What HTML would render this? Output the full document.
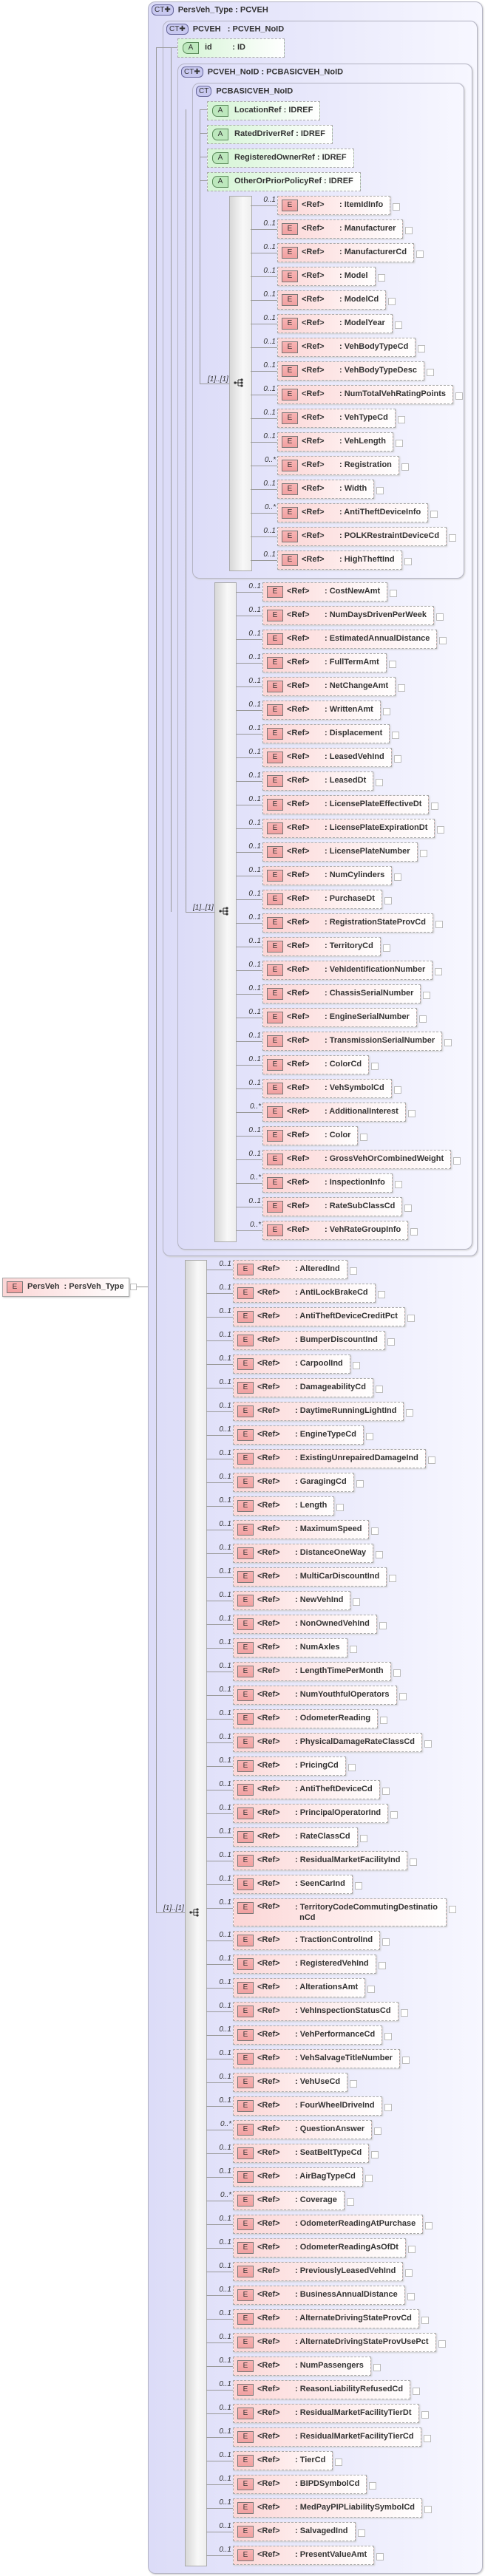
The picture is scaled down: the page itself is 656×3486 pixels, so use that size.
<!DOCTYPE html>
<html><head><meta charset="utf-8"><style>
body{margin:0;width:656px;height:3486px;background:#fff;position:relative;font-family:"Liberation Sans",sans-serif;color:#333;overflow:hidden}
.bx{position:absolute;border:1px solid #b4b4c4;border-radius:10px;background:linear-gradient(to right,#dcdcf8,#f7f7ff);box-shadow:1px 1px 2px #ccc}
.hd{position:absolute;font-size:11px;font-weight:bold;white-space:nowrap}
.ct{display:inline-block;height:13px;line-height:13px;padding:0 3px;border:1px solid #66669a;border-radius:6px;background:#c8c8f0;font-size:10px;font-weight:normal;margin-right:6px;vertical-align:middle}
.ln{position:absolute;background:#999}
.bar{position:absolute;border:1px solid #aaa;background:linear-gradient(to right,#d8d8d8,#f8f8f8 60%,#eee)}
.sq{position:absolute;font-size:10px;font-style:italic}
.g{position:absolute}
.r{position:absolute;left:0;height:26px;white-space:nowrap}
.r::before{content:"";position:absolute;left:-36px;width:36px;top:13px;height:1px;background:#999}
.r em{position:absolute;right:100%;margin-right:2px;top:0;font-size:10px}
.r p{position:absolute;left:0;top:0;margin:0;height:24px;line-height:22px;padding:0 9px 0 32px;border:1px dashed #aaa;background:linear-gradient(to right,#fcd6d6,#fff);font-size:11px;font-weight:bold;box-shadow:1px 1px 2px #ccc}
.r p::after{content:"";position:absolute;right:-14px;top:9px;width:8px;height:8px;border:1px solid #bbb;background:#fff}
.r s{position:absolute;left:5px;top:4px;width:20px;height:14px;line-height:14px;text-align:center;text-decoration:none;font-weight:normal;font-size:10px;border:1px solid #777;background:linear-gradient(#f9b4b4,#f0a0a0)}
.r i{display:inline-block;width:51px;font-style:normal}
.a{position:absolute;height:24px;line-height:22px;padding:0 9px 0 36px;border:1px dashed #aaa;background:linear-gradient(to right,#d4f4d4,#fff);font-size:11px;font-weight:bold;white-space:nowrap}
.a s{position:absolute;left:6px;top:4px;width:20px;height:14px;line-height:14px;text-align:center;text-decoration:none;font-weight:normal;font-size:10px;border:1px solid #5a8a5a;border-radius:7px 0 0 7px;background:#bde8bd}
.ico{position:absolute;width:14px;height:12px}
</style></head><body>

<div style="position:absolute;left:3px;top:1729px;width:170px;height:24px;border:1px solid #aaa;background:linear-gradient(to right,#fcd6d6,#fff);font-size:11px;font-weight:bold;line-height:22px;box-shadow:1px 1px 2px #ccc"><span style="position:absolute;left:5px;top:4px;width:20px;height:14px;line-height:14px;text-align:center;font-weight:normal;font-size:10px;border:1px solid #777;background:linear-gradient(#f9b4b4,#f0a0a0)">E</span><span style="position:absolute;left:33px">PersVeh&nbsp; : PersVeh_Type</span></div>
<div style="position:absolute;left:176px;top:1737px;width:7px;height:7px;border:1px solid #bbb;background:#fff"></div>
<div class="ln" style="left:185px;top:1741px;width:26px;height:1px"></div>

<div class="bx" style="left:200px;top:2px;width:451px;height:3479px"></div>
<div class="hd" style="left:205px;top:6px"><span class="ct">CT✚</span>PersVeh_Type : PCVEH</div>
<div class="bx" style="left:220px;top:28px;width:424px;height:1670px"></div>
<div class="hd" style="left:225px;top:32px"><span class="ct">CT✚</span>PCVEH &nbsp; : PCVEH_NoID</div>
<div class="bx" style="left:240px;top:86px;width:397px;height:1603px"></div>
<div class="hd" style="left:245px;top:90px"><span class="ct">CT✚</span>PCVEH_NoID : PCBASICVEH_NoID</div>
<div class="bx" style="left:260px;top:112px;width:366px;height:669px"></div>
<div class="hd" style="left:265px;top:116px"><span class="ct">CT</span>PCBASICVEH_NoID</div>

<div class="ln" style="left:211px;top:64px;width:1px;height:2524px"></div>
<div class="ln" style="left:211px;top:64px;width:30px;height:1px"></div>
<div class="ln" style="left:231px;top:64px;width:1px;height:1170px"></div>
<div class="ln" style="left:251px;top:148px;width:1px;height:1086px"></div>
<div class="ln" style="left:270px;top:148px;width:1px;height:371px"></div>
<div class="ln" style="left:270px;top:148px;width:12px;height:1px"></div>
<div class="ln" style="left:270px;top:180px;width:12px;height:1px"></div>
<div class="ln" style="left:270px;top:212px;width:12px;height:1px"></div>
<div class="ln" style="left:270px;top:244px;width:12px;height:1px"></div>
<div class="ln" style="left:270px;top:519px;width:40px;height:1px"></div>
<div class="ln" style="left:251px;top:1234px;width:39px;height:1px"></div>
<div class="ln" style="left:211px;top:2588px;width:39px;height:1px"></div>

<div class="a" style="left:240px;top:52px;width:98px"><s>A</s>id &nbsp; &nbsp; &nbsp; &nbsp; : ID</div>
<div class="a" style="left:280px;top:137px"><s>A</s>LocationRef : IDREF</div>
<div class="a" style="left:280px;top:169px"><s>A</s>RatedDriverRef : IDREF</div>
<div class="a" style="left:280px;top:201px"><s>A</s>RegisteredOwnerRef : IDREF</div>
<div class="a" style="left:280px;top:233px"><s>A</s>OtherOrPriorPolicyRef : IDREF</div>

<div class="bar" style="left:310px;top:265px;width:29px;height:506px"></div>
<div class="bar" style="left:290px;top:788px;width:28px;height:891px"></div>
<div class="bar" style="left:250px;top:1705px;width:28px;height:1766px"></div>
<div class="sq" style="left:281px;top:508px">[1]..[1]</div>
<div class="sq" style="left:261px;top:1223px">[1]..[1]</div>
<div class="sq" style="left:221px;top:2577px">[1]..[1]</div>
<svg class="ico" style="left:316px;top:512px" viewBox="0 0 14 12"><circle cx="2" cy="6" r="1.6" fill="#333"/><path d="M2 6H6M6 2V10M6 2H11M6 6H11M6 10H11" stroke="#333" fill="none"/><circle cx="11" cy="2" r="1.6" fill="#333"/><circle cx="11" cy="6" r="1.6" fill="#333"/><circle cx="11" cy="10" r="1.6" fill="#333"/></svg>
<svg class="ico" style="left:296px;top:1227px" viewBox="0 0 14 12"><circle cx="2" cy="6" r="1.6" fill="#333"/><path d="M2 6H6M6 2V10M6 2H11M6 6H11M6 10H11" stroke="#333" fill="none"/><circle cx="11" cy="2" r="1.6" fill="#333"/><circle cx="11" cy="6" r="1.6" fill="#333"/><circle cx="11" cy="10" r="1.6" fill="#333"/></svg>
<svg class="ico" style="left:256px;top:2582px" viewBox="0 0 14 12"><circle cx="2" cy="6" r="1.6" fill="#333"/><path d="M2 6H6M6 2V10M6 2H11M6 6H11M6 10H11" stroke="#333" fill="none"/><circle cx="11" cy="2" r="1.6" fill="#333"/><circle cx="11" cy="6" r="1.6" fill="#333"/><circle cx="11" cy="10" r="1.6" fill="#333"/></svg>

<div class="g" style="left:375px;top:265px">
<div class="r" style="top:0"><em>0..1</em><p><s>E</s><i>&lt;Ref&gt;</i>: ItemIdInfo</p></div>
<div class="r" style="top:32px"><em>0..1</em><p><s>E</s><i>&lt;Ref&gt;</i>: Manufacturer</p></div>
<div class="r" style="top:64px"><em>0..1</em><p><s>E</s><i>&lt;Ref&gt;</i>: ManufacturerCd</p></div>
<div class="r" style="top:96px"><em>0..1</em><p><s>E</s><i>&lt;Ref&gt;</i>: Model</p></div>
<div class="r" style="top:128px"><em>0..1</em><p><s>E</s><i>&lt;Ref&gt;</i>: ModelCd</p></div>
<div class="r" style="top:160px"><em>0..1</em><p><s>E</s><i>&lt;Ref&gt;</i>: ModelYear</p></div>
<div class="r" style="top:192px"><em>0..1</em><p><s>E</s><i>&lt;Ref&gt;</i>: VehBodyTypeCd</p></div>
<div class="r" style="top:224px"><em>0..1</em><p><s>E</s><i>&lt;Ref&gt;</i>: VehBodyTypeDesc</p></div>
<div class="r" style="top:256px"><em>0..1</em><p><s>E</s><i>&lt;Ref&gt;</i>: NumTotalVehRatingPoints</p></div>
<div class="r" style="top:288px"><em>0..1</em><p><s>E</s><i>&lt;Ref&gt;</i>: VehTypeCd</p></div>
<div class="r" style="top:320px"><em>0..1</em><p><s>E</s><i>&lt;Ref&gt;</i>: VehLength</p></div>
<div class="r" style="top:352px"><em>0..*</em><p><s>E</s><i>&lt;Ref&gt;</i>: Registration</p></div>
<div class="r" style="top:384px"><em>0..1</em><p><s>E</s><i>&lt;Ref&gt;</i>: Width</p></div>
<div class="r" style="top:416px"><em>0..*</em><p><s>E</s><i>&lt;Ref&gt;</i>: AntiTheftDeviceInfo</p></div>
<div class="r" style="top:448px"><em>0..1</em><p><s>E</s><i>&lt;Ref&gt;</i>: POLKRestraintDeviceCd</p></div>
<div class="r" style="top:480px"><em>0..1</em><p><s>E</s><i>&lt;Ref&gt;</i>: HighTheftInd</p></div>
</div>

<div class="g" style="left:355px;top:788px">
<div class="r" style="top:0"><em>0..1</em><p><s>E</s><i>&lt;Ref&gt;</i>: CostNewAmt</p></div>
<div class="r" style="top:32px"><em>0..1</em><p><s>E</s><i>&lt;Ref&gt;</i>: NumDaysDrivenPerWeek</p></div>
<div class="r" style="top:64px"><em>0..1</em><p><s>E</s><i>&lt;Ref&gt;</i>: EstimatedAnnualDistance</p></div>
<div class="r" style="top:96px"><em>0..1</em><p><s>E</s><i>&lt;Ref&gt;</i>: FullTermAmt</p></div>
<div class="r" style="top:128px"><em>0..1</em><p><s>E</s><i>&lt;Ref&gt;</i>: NetChangeAmt</p></div>
<div class="r" style="top:160px"><em>0..1</em><p><s>E</s><i>&lt;Ref&gt;</i>: WrittenAmt</p></div>
<div class="r" style="top:192px"><em>0..1</em><p><s>E</s><i>&lt;Ref&gt;</i>: Displacement</p></div>
<div class="r" style="top:224px"><em>0..1</em><p><s>E</s><i>&lt;Ref&gt;</i>: LeasedVehInd</p></div>
<div class="r" style="top:256px"><em>0..1</em><p><s>E</s><i>&lt;Ref&gt;</i>: LeasedDt</p></div>
<div class="r" style="top:288px"><em>0..1</em><p><s>E</s><i>&lt;Ref&gt;</i>: LicensePlateEffectiveDt</p></div>
<div class="r" style="top:320px"><em>0..1</em><p><s>E</s><i>&lt;Ref&gt;</i>: LicensePlateExpirationDt</p></div>
<div class="r" style="top:352px"><em>0..1</em><p><s>E</s><i>&lt;Ref&gt;</i>: LicensePlateNumber</p></div>
<div class="r" style="top:384px"><em>0..1</em><p><s>E</s><i>&lt;Ref&gt;</i>: NumCylinders</p></div>
<div class="r" style="top:416px"><em>0..1</em><p><s>E</s><i>&lt;Ref&gt;</i>: PurchaseDt</p></div>
<div class="r" style="top:448px"><em>0..1</em><p><s>E</s><i>&lt;Ref&gt;</i>: RegistrationStateProvCd</p></div>
<div class="r" style="top:480px"><em>0..1</em><p><s>E</s><i>&lt;Ref&gt;</i>: TerritoryCd</p></div>
<div class="r" style="top:512px"><em>0..1</em><p><s>E</s><i>&lt;Ref&gt;</i>: VehIdentificationNumber</p></div>
<div class="r" style="top:544px"><em>0..1</em><p><s>E</s><i>&lt;Ref&gt;</i>: ChassisSerialNumber</p></div>
<div class="r" style="top:576px"><em>0..1</em><p><s>E</s><i>&lt;Ref&gt;</i>: EngineSerialNumber</p></div>
<div class="r" style="top:608px"><em>0..1</em><p><s>E</s><i>&lt;Ref&gt;</i>: TransmissionSerialNumber</p></div>
<div class="r" style="top:640px"><em>0..1</em><p><s>E</s><i>&lt;Ref&gt;</i>: ColorCd</p></div>
<div class="r" style="top:672px"><em>0..1</em><p><s>E</s><i>&lt;Ref&gt;</i>: VehSymbolCd</p></div>
<div class="r" style="top:704px"><em>0..*</em><p><s>E</s><i>&lt;Ref&gt;</i>: AdditionalInterest</p></div>
<div class="r" style="top:736px"><em>0..1</em><p><s>E</s><i>&lt;Ref&gt;</i>: Color</p></div>
<div class="r" style="top:768px"><em>0..1</em><p><s>E</s><i>&lt;Ref&gt;</i>: GrossVehOrCombinedWeight</p></div>
<div class="r" style="top:800px"><em>0..*</em><p><s>E</s><i>&lt;Ref&gt;</i>: InspectionInfo</p></div>
<div class="r" style="top:832px"><em>0..1</em><p><s>E</s><i>&lt;Ref&gt;</i>: RateSubClassCd</p></div>
<div class="r" style="top:864px"><em>0..*</em><p><s>E</s><i>&lt;Ref&gt;</i>: VehRateGroupInfo</p></div>
</div>

<div class="g" style="left:315px;top:1705px">
<div class="r" style="top:0"><em>0..1</em><p><s>E</s><i>&lt;Ref&gt;</i>: AlteredInd</p></div>
<div class="r" style="top:32px"><em>0..1</em><p><s>E</s><i>&lt;Ref&gt;</i>: AntiLockBrakeCd</p></div>
<div class="r" style="top:64px"><em>0..1</em><p><s>E</s><i>&lt;Ref&gt;</i>: AntiTheftDeviceCreditPct</p></div>
<div class="r" style="top:96px"><em>0..1</em><p><s>E</s><i>&lt;Ref&gt;</i>: BumperDiscountInd</p></div>
<div class="r" style="top:128px"><em>0..1</em><p><s>E</s><i>&lt;Ref&gt;</i>: CarpoolInd</p></div>
<div class="r" style="top:160px"><em>0..1</em><p><s>E</s><i>&lt;Ref&gt;</i>: DamageabilityCd</p></div>
<div class="r" style="top:192px"><em>0..1</em><p><s>E</s><i>&lt;Ref&gt;</i>: DaytimeRunningLightInd</p></div>
<div class="r" style="top:224px"><em>0..1</em><p><s>E</s><i>&lt;Ref&gt;</i>: EngineTypeCd</p></div>
<div class="r" style="top:256px"><em>0..1</em><p><s>E</s><i>&lt;Ref&gt;</i>: ExistingUnrepairedDamageInd</p></div>
<div class="r" style="top:288px"><em>0..1</em><p><s>E</s><i>&lt;Ref&gt;</i>: GaragingCd</p></div>
<div class="r" style="top:320px"><em>0..1</em><p><s>E</s><i>&lt;Ref&gt;</i>: Length</p></div>
<div class="r" style="top:352px"><em>0..1</em><p><s>E</s><i>&lt;Ref&gt;</i>: MaximumSpeed</p></div>
<div class="r" style="top:384px"><em>0..1</em><p><s>E</s><i>&lt;Ref&gt;</i>: DistanceOneWay</p></div>
<div class="r" style="top:416px"><em>0..1</em><p><s>E</s><i>&lt;Ref&gt;</i>: MultiCarDiscountInd</p></div>
<div class="r" style="top:448px"><em>0..1</em><p><s>E</s><i>&lt;Ref&gt;</i>: NewVehInd</p></div>
<div class="r" style="top:480px"><em>0..1</em><p><s>E</s><i>&lt;Ref&gt;</i>: NonOwnedVehInd</p></div>
<div class="r" style="top:512px"><em>0..1</em><p><s>E</s><i>&lt;Ref&gt;</i>: NumAxles</p></div>
<div class="r" style="top:544px"><em>0..1</em><p><s>E</s><i>&lt;Ref&gt;</i>: LengthTimePerMonth</p></div>
<div class="r" style="top:576px"><em>0..1</em><p><s>E</s><i>&lt;Ref&gt;</i>: NumYouthfulOperators</p></div>
<div class="r" style="top:608px"><em>0..1</em><p><s>E</s><i>&lt;Ref&gt;</i>: OdometerReading</p></div>
<div class="r" style="top:640px"><em>0..1</em><p><s>E</s><i>&lt;Ref&gt;</i>: PhysicalDamageRateClassCd</p></div>
<div class="r" style="top:672px"><em>0..1</em><p><s>E</s><i>&lt;Ref&gt;</i>: PricingCd</p></div>
<div class="r" style="top:704px"><em>0..1</em><p><s>E</s><i>&lt;Ref&gt;</i>: AntiTheftDeviceCd</p></div>
<div class="r" style="top:736px"><em>0..1</em><p><s>E</s><i>&lt;Ref&gt;</i>: PrincipalOperatorInd</p></div>
<div class="r" style="top:768px"><em>0..1</em><p><s>E</s><i>&lt;Ref&gt;</i>: RateClassCd</p></div>
<div class="r" style="top:800px"><em>0..1</em><p><s>E</s><i>&lt;Ref&gt;</i>: ResidualMarketFacilityInd</p></div>
<div class="r" style="top:832px"><em>0..1</em><p><s>E</s><i>&lt;Ref&gt;</i>: SeenCarInd</p></div>
<div class="r" style="top:864px;height:38px"><em>0..1</em><p style="height:36px;width:246px;padding-top:0;line-height:13px"><s>E</s><span style="position:absolute;left:32px;top:4px">&lt;Ref&gt;</span><span style="position:absolute;left:83px;top:4px;line-height:14px">: TerritoryCodeCommutingDestinatio<br>&nbsp; nCd</span></p></div>
<div class="r" style="top:908px"><em>0..1</em><p><s>E</s><i>&lt;Ref&gt;</i>: TractionControlInd</p></div>
<div class="r" style="top:940px"><em>0..1</em><p><s>E</s><i>&lt;Ref&gt;</i>: RegisteredVehInd</p></div>
<div class="r" style="top:972px"><em>0..1</em><p><s>E</s><i>&lt;Ref&gt;</i>: AlterationsAmt</p></div>
<div class="r" style="top:1004px"><em>0..1</em><p><s>E</s><i>&lt;Ref&gt;</i>: VehInspectionStatusCd</p></div>
<div class="r" style="top:1036px"><em>0..1</em><p><s>E</s><i>&lt;Ref&gt;</i>: VehPerformanceCd</p></div>
<div class="r" style="top:1068px"><em>0..1</em><p><s>E</s><i>&lt;Ref&gt;</i>: VehSalvageTitleNumber</p></div>
<div class="r" style="top:1100px"><em>0..1</em><p><s>E</s><i>&lt;Ref&gt;</i>: VehUseCd</p></div>
<div class="r" style="top:1132px"><em>0..1</em><p><s>E</s><i>&lt;Ref&gt;</i>: FourWheelDriveInd</p></div>
<div class="r" style="top:1164px"><em>0..*</em><p><s>E</s><i>&lt;Ref&gt;</i>: QuestionAnswer</p></div>
<div class="r" style="top:1196px"><em>0..1</em><p><s>E</s><i>&lt;Ref&gt;</i>: SeatBeltTypeCd</p></div>
<div class="r" style="top:1228px"><em>0..1</em><p><s>E</s><i>&lt;Ref&gt;</i>: AirBagTypeCd</p></div>
<div class="r" style="top:1260px"><em>0..*</em><p><s>E</s><i>&lt;Ref&gt;</i>: Coverage</p></div>
<div class="r" style="top:1292px"><em>0..1</em><p><s>E</s><i>&lt;Ref&gt;</i>: OdometerReadingAtPurchase</p></div>
<div class="r" style="top:1324px"><em>0..1</em><p><s>E</s><i>&lt;Ref&gt;</i>: OdometerReadingAsOfDt</p></div>
<div class="r" style="top:1356px"><em>0..1</em><p><s>E</s><i>&lt;Ref&gt;</i>: PreviouslyLeasedVehInd</p></div>
<div class="r" style="top:1388px"><em>0..1</em><p><s>E</s><i>&lt;Ref&gt;</i>: BusinessAnnualDistance</p></div>
<div class="r" style="top:1420px"><em>0..1</em><p><s>E</s><i>&lt;Ref&gt;</i>: AlternateDrivingStateProvCd</p></div>
<div class="r" style="top:1452px"><em>0..1</em><p><s>E</s><i>&lt;Ref&gt;</i>: AlternateDrivingStateProvUsePct</p></div>
<div class="r" style="top:1484px"><em>0..1</em><p><s>E</s><i>&lt;Ref&gt;</i>: NumPassengers</p></div>
<div class="r" style="top:1516px"><em>0..1</em><p><s>E</s><i>&lt;Ref&gt;</i>: ReasonLiabilityRefusedCd</p></div>
<div class="r" style="top:1548px"><em>0..1</em><p><s>E</s><i>&lt;Ref&gt;</i>: ResidualMarketFacilityTierDt</p></div>
<div class="r" style="top:1580px"><em>0..1</em><p><s>E</s><i>&lt;Ref&gt;</i>: ResidualMarketFacilityTierCd</p></div>
<div class="r" style="top:1612px"><em>0..1</em><p><s>E</s><i>&lt;Ref&gt;</i>: TierCd</p></div>
<div class="r" style="top:1644px"><em>0..1</em><p><s>E</s><i>&lt;Ref&gt;</i>: BIPDSymbolCd</p></div>
<div class="r" style="top:1676px"><em>0..1</em><p><s>E</s><i>&lt;Ref&gt;</i>: MedPayPIPLiabilitySymbolCd</p></div>
<div class="r" style="top:1708px"><em>0..1</em><p><s>E</s><i>&lt;Ref&gt;</i>: SalvagedInd</p></div>
<div class="r" style="top:1740px"><em>0..1</em><p><s>E</s><i>&lt;Ref&gt;</i>: PresentValueAmt</p></div>
</div>

</body></html>
